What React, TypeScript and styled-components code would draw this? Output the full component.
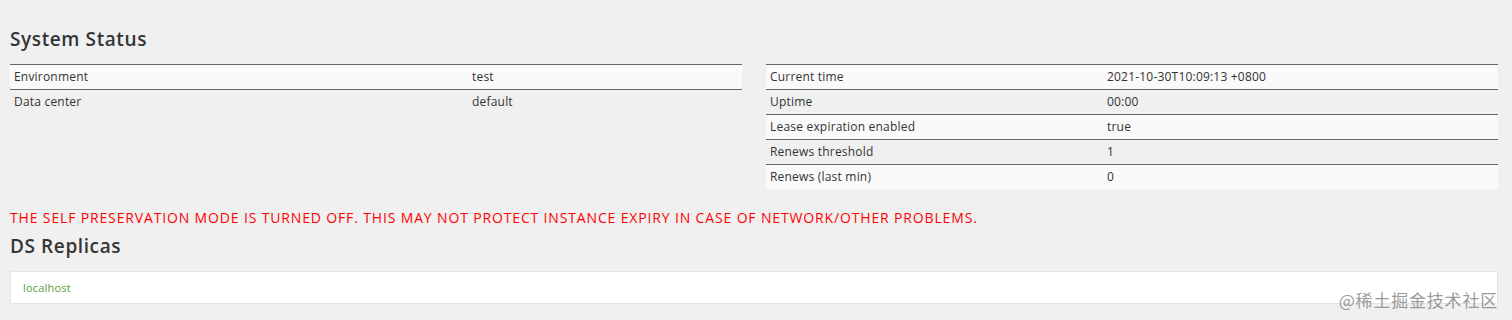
import * as React from "react";
import styled, { createGlobalStyle } from "styled-components";

const GlobalStyle = createGlobalStyle`
  html, body {
    margin: 0;
    padding: 0;
    background: #f0f0f0;
  }
  body {
    font-family: "Open Sans", "Liberation Sans", sans-serif;
    font-size: 12px;
    color: #333;
  }
`;

const Page = styled.div`
  position: relative;
  box-sizing: border-box;
  width: 1512px;
  height: 320px;
  padding: 26px 14px 0 10px;
  overflow: hidden;
`;

const Heading = styled.h2`
  margin: 0;
  font-family: "Open Sans", "Liberation Sans", sans-serif;
  font-weight: 600;
  font-size: 19px;
  line-height: 26px;
  letter-spacing: 0.6px;
  color: #353535;
`;

const Columns = styled.div`
  display: grid;
  grid-template-columns: 1fr 1fr;
  column-gap: 24px;
  margin-top: 12px;
`;

const Table = styled.table`
  width: 100%;
  border-collapse: collapse;
  table-layout: fixed;
  align-self: start;
`;

const Row = styled.tr<{ $striped: boolean }>`
  background: ${(p) => (p.$striped ? "#fafafa" : "transparent")};
  border-top: 1px solid #666;
`;

const Cell = styled.td<{ $width?: string }>`
  padding: 0 4px;
  height: 24px;
  line-height: 24px;
  font-size: 12px;
  letter-spacing: 0.2px;
  color: #333;
  white-space: nowrap;
  ${(p) => (p.$width ? `width: ${p.$width};` : "")}
`;

const Warning = styled.div`
  margin-top: 20px;
  font-family: "Open Sans", "Liberation Sans", sans-serif;
  font-size: 14px;
  font-weight: 500;
  line-height: 18px;
  letter-spacing: 0.85px;
  color: #ff0000;
  text-transform: uppercase;
`;

const SubHeading = styled(Heading)`
  margin-top: 6px;
`;

const ReplicaBox = styled.div`
  margin-top: 12px;
  box-sizing: border-box;
  height: 33px;
  padding: 0 12px;
  background: #fff;
  border: 1px solid #e3e3e3;
  display: flex;
  align-items: center;
`;

const ReplicaLink = styled.span`
  font-size: 11px;
  letter-spacing: 0.2px;
  color: #5b9b3a;
`;

const Watermark = styled.div`
  position: absolute;
  right: 14px;
  bottom: 10px;
  font-family: "Noto Sans CJK SC", sans-serif;
  font-size: 17px;
  line-height: 20px;
  color: rgba(120, 120, 120, 0.75);
  letter-spacing: 0.8px;
`;

type Item = { label: string; value: string };

const envInfo: Item[] = [
  { label: "Environment", value: "test" },
  { label: "Data center", value: "default" },
];

const statusInfo: Item[] = [
  { label: "Current time", value: "2021-10-30T10:09:13 +0800" },
  { label: "Uptime", value: "00:00" },
  { label: "Lease expiration enabled", value: "true" },
  { label: "Renews threshold", value: "1" },
  { label: "Renews (last min)", value: "0" },
];

const InfoTable = ({ items, labelWidth }: { items: Item[]; labelWidth: string }) => (
  <Table>
    <tbody>
      {items.map((item, i) => (
        <Row key={item.label} $striped={i % 2 === 0}>
          <Cell $width={labelWidth}>{item.label}</Cell>
          <Cell>{item.value}</Cell>
        </Row>
      ))}
    </tbody>
  </Table>
);

export default function App() {
  return (
    <Page>
      <GlobalStyle />
      <Heading>System Status</Heading>
      <Columns>
        <InfoTable items={envInfo} labelWidth="450px" />
        <InfoTable items={statusInfo} labelWidth="329px" />
      </Columns>
      <Warning>
        THE SELF PRESERVATION MODE IS TURNED OFF. THIS MAY NOT PROTECT INSTANCE EXPIRY IN CASE OF
        NETWORK/OTHER PROBLEMS.
      </Warning>
      <SubHeading>DS Replicas</SubHeading>
      <ReplicaBox>
        <ReplicaLink>localhost</ReplicaLink>
      </ReplicaBox>
      <Watermark>@稀土掘金技术社区</Watermark>
    </Page>
  );
}
